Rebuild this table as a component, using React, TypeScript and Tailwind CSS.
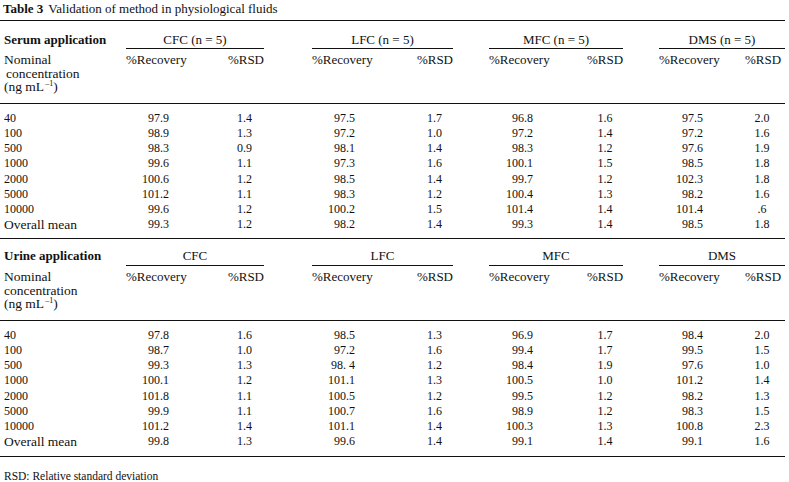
import React from "react";

const GRID =
  "grid grid-cols-[126px_99px_39px_48px_104px_37px_36px_98px_36px_36px_86px_34px_10px]";

type Row = [string, string, string, string, string, string, string, string, string];

const serumRows: Row[] = [
  ["40", "97.9", "1.4", "97.5", "1.7", "96.8", "1.6", "97.5", "2.0"],
  ["100", "98.9", "1.3", "97.2", "1.0", "97.2", "1.4", "97.2", "1.6"],
  ["500", "98.3", "0.9", "98.1", "1.4", "98.3", "1.2", "97.6", "1.9"],
  ["1000", "99.6", "1.1", "97.3", "1.6", "100.1", "1.5", "98.5", "1.8"],
  ["2000", "100.6", "1.2", "98.5", "1.4", "99.7", "1.2", "102.3", "1.8"],
  ["5000", "101.2", "1.1", "98.3", "1.2", "100.4", "1.3", "98.2", "1.6"],
  ["10000", "99.6", "1.2", "100.2", "1.5", "101.4", "1.4", "101.4", ".6"],
  ["Overall mean", "99.3", "1.2", "98.2", "1.4", "99.3", "1.4", "98.5", "1.8"],
];

const urineRows: Row[] = [
  ["40", "97.8", "1.6", "98.5", "1.3", "96.9", "1.7", "98.4", "2.0"],
  ["100", "98.7", "1.0", "97.2", "1.6", "99.4", "1.7", "99.5", "1.5"],
  ["500", "99.3", "1.3", "98. 4", "1.2", "98.4", "1.9", "97.6", "1.0"],
  ["1000", "100.1", "1.2", "101.1", "1.3", "100.5", "1.0", "101.2", "1.4"],
  ["2000", "101.8", "1.1", "100.5", "1.2", "99.5", "1.2", "98.2", "1.3"],
  ["5000", "99.9", "1.1", "100.7", "1.6", "98.9", "1.2", "98.3", "1.5"],
  ["10000", "101.2", "1.4", "101.1", "1.4", "100.3", "1.3", "100.8", "2.3"],
  ["Overall mean", "99.8", "1.3", "99.6", "1.4", "99.1", "1.4", "99.1", "1.6"],
];

function Rule() {
  return <div className="h-px bg-[#111111] mr-[4px]" />;
}

function DataRow({ r }: { r: Row }) {
  const isText = r[0] === "Overall mean";
  return (
    <div className={`${GRID} h-[15.14px] leading-[15.14px] text-[12px]`}>
      <div className={`pl-[4px] whitespace-nowrap ${isText ? "text-[13.5px]" : ""}`}>{r[0]}</div>
      <div className="text-right pr-[56px] whitespace-pre">{r[1]}</div>
      <div className="text-center">{r[2]}</div>
      <div />
      <div className="text-right pr-[61px] whitespace-pre">{r[3]}</div>
      <div className="text-center">{r[4]}</div>
      <div />
      <div className="text-right pr-[54px] whitespace-pre">{r[5]}</div>
      <div className="text-center">{r[6]}</div>
      <div />
      <div className="text-right pr-[42px] whitespace-pre">{r[7]}</div>
      <div className="text-center">{r[8]}</div>
      <div />
    </div>
  );
}

function Section({
  title,
  groups,
  rows,
  indent,
  headPb,
  bodyPb,
}: {
  title: string;
  groups: [string, string, string, string];
  rows: Row[];
  indent: boolean;
  headPb: string;
  bodyPb: string;
}) {
  return (
    <div>
      <div className={`${GRID} text-[13px] leading-[15px]`}>
        <div className={`h-[28px] flex items-end pl-[4px] font-bold whitespace-nowrap ${headPb}`}>
          <span className="pb-px">{title}</span>
        </div>
        <div className={`col-start-2 col-span-2 h-[28px] border-b border-[#111111] flex items-end justify-center ${headPb}`}>
          {groups[0]}
        </div>
        <div className={`col-start-5 col-span-2 h-[28px] border-b border-[#111111] flex items-end justify-center ${headPb}`}>
          {groups[1]}
        </div>
        <div className={`col-start-8 col-span-2 h-[28px] border-b border-[#111111] flex items-end justify-center ${headPb}`}>
          {groups[2]}
        </div>
        <div className={`col-start-11 col-span-3 mr-[4px] h-[28px] border-b border-[#111111] flex items-end justify-center ${headPb}`}>
          {groups[3]}
        </div>
      </div>
      <div className={`${GRID} h-[54px] pt-[4px] text-[13px] leading-[13.5px]`}>
        <div className="pl-[4px] whitespace-nowrap text-[13.5px]">
          <div>Nominal</div>
          <div className={indent ? "pl-[2px]" : ""}>concentration</div>
          <div>
            (ng mL<span className="text-[8px] relative -top-[5px] ml-px">–1</span>)
          </div>
        </div>
        <div className="whitespace-nowrap">%Recovery</div>
        <div className="text-right whitespace-nowrap">%RSD</div>
        <div />
        <div className="whitespace-nowrap">%Recovery</div>
        <div className="text-right whitespace-nowrap">%RSD</div>
        <div />
        <div className="whitespace-nowrap">%Recovery</div>
        <div className="text-right whitespace-nowrap">%RSD</div>
        <div />
        <div className="whitespace-nowrap">%Recovery</div>
        <div className="text-right whitespace-nowrap">%RSD</div>
        <div />
      </div>
      <Rule />
      <div className={`pt-[7px] ${bodyPb}`}>
        {rows.map((r, i) => (
          <DataRow key={i} r={r} />
        ))}
      </div>
      <Rule />
    </div>
  );
}

export default function App() {
  return (
    <div className="w-[789px] h-[482px] bg-white text-[#111111] font-['Liberation_Serif',serif] overflow-hidden">
      <div className="h-[20px] pt-[1px] pl-[3px] text-[13px] leading-[16px] whitespace-nowrap">
        <span className="font-bold">Table 3</span>
        <span className="ml-[5px]">Validation of method in physiological fluids</span>
      </div>
      <Rule />
      <Section
        title="Serum application"
        groups={["CFC (n = 5)", "LFC (n = 5)", "MFC (n = 5)", "DMS (n = 5)"]}
        rows={serumRows}
        indent={true}
        headPb="pb-[1px]"
        bodyPb="pb-[6px]"
      />
      <div className="-mt-px">
        <Section
          title="Urine application"
          groups={["CFC", "LFC", "MFC", "DMS"]}
          rows={urineRows}
          indent={false}
          headPb="pb-[2px]"
          bodyPb="pb-[7px]"
        />
      </div>
      <div className="pt-[12px] pl-[4px] text-[11.5px] leading-[14px] whitespace-nowrap">
        RSD: Relative standard deviation
      </div>
    </div>
  );
}
